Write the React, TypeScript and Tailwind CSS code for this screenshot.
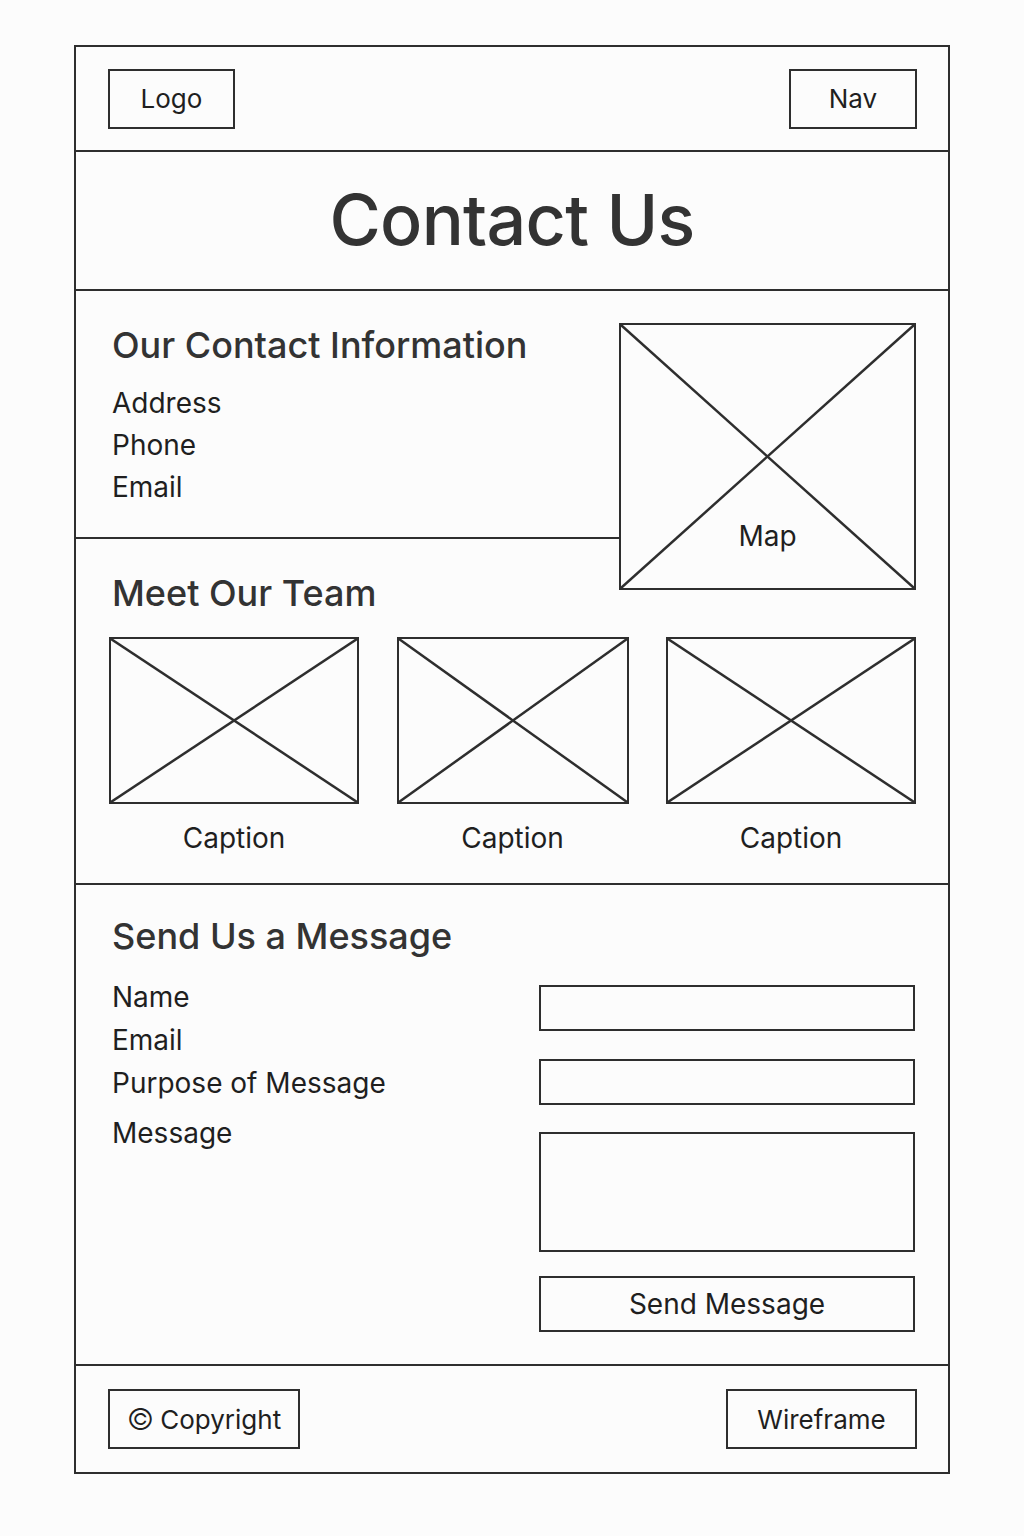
import React from 'react';

const line = 'border-[#2e2e2e]';

function Cross() {
    return (
        <svg className="absolute inset-0 w-full h-full" viewBox="0 0 100 100" preserveAspectRatio="none">
            <line x1="0" y1="0" x2="100" y2="100" stroke="#2e2e2e" strokeWidth="2.5" vectorEffect="non-scaling-stroke" />
            <line x1="100" y1="0" x2="0" y2="100" stroke="#2e2e2e" strokeWidth="2.5" vectorEffect="non-scaling-stroke" />
        </svg>
    );
}

function TeamCard({ width }: { width: string }) {
    return (
        <div className={`flex flex-col items-center ${width}`}>
            <div className={`relative w-full h-[167px] border-2 ${line}`}>
                <Cross />
            </div>
            <div className="mt-[16px] text-[28px] leading-[36px] text-[#1f1f1f]">Caption</div>
        </div>
    );
}

export default function App() {
    return (
        <div className="min-h-screen bg-[#fcfcfc] pt-[45px] pb-[62px]" style={{ fontFamily: 'Inter, "Noto Sans", sans-serif' }}>
            <div className={`mx-auto w-[876px] border-2 ${line} text-[#1f1f1f]`}>
                {/* header */}
                <header className={`h-[105px] flex items-center justify-between pl-[32px] pr-[31px] border-b-2 ${line}`}>
                    <div className={`w-[127px] h-[60px] border-2 ${line} flex items-center justify-center text-[26px]`}>Logo</div>
                    <div className={`w-[128px] h-[60px] border-2 ${line} flex items-center justify-center text-[26px]`}>Nav</div>
                </header>

                {/* title */}
                <section className={`h-[139px] flex items-center justify-center border-b-2 ${line}`}>
                    <h1 className="text-[70px] font-medium tracking-[-0.01em] text-[#333] leading-none pb-[2px]">Contact Us</h1>
                </section>

                {/* contact + team */}
                <section className={`border-b-2 ${line}`}>
                    <div className="flex">
                        <div className="w-[543px]">
                            <div className={`pl-[36px] pt-[34px] pb-[29px] border-b-2 ${line}`}>
                                <h2 className="text-[36px] leading-[40px] font-medium text-[#333]">Our Contact Information</h2>
                                <ul className="mt-[17px] text-[28px] leading-[42px]">
                                    <li>Address</li>
                                    <li>Phone</li>
                                    <li>Email</li>
                                </ul>
                            </div>
                            <h2 className="pl-[36px] pt-[34px] pb-[24px] text-[36px] leading-[40px] font-medium text-[#333]">Meet Our Team</h2>
                        </div>
                        <div className="flex-1 pt-[32px] pr-[32px]">
                            <div className={`relative w-[297px] h-[267px] border-2 ${line} flex flex-col items-center justify-end pb-[34px]`}>
                                <Cross />
                                <span className="relative text-[28px] leading-[36px]">Map</span>
                            </div>
                        </div>
                    </div>
                    <div className="flex justify-between pl-[33px] pr-[32px] pb-[27px]">
                        <TeamCard width="w-[250px]" />
                        <TeamCard width="w-[232px]" />
                        <TeamCard width="w-[250px]" />
                    </div>
                </section>

                {/* message form */}
                <section className={`border-b-2 ${line} pl-[36px] pr-[33px] pt-[31px] pb-[32px]`}>
                    <h2 className="text-[36px] leading-[40px] font-medium text-[#333]">Send Us a Message</h2>
                    <div className="flex justify-between">
                        <div className="mt-[20px] text-[28px] leading-[43px]">
                            <div>Name</div>
                            <div>Email</div>
                            <div>Purpose of Message</div>
                            <div className="mt-[7px]">Message</div>
                        </div>
                        <div className="mt-[29px] w-[376px] flex flex-col">
                            <div className={`h-[46px] border-2 ${line}`} />
                            <div className={`mt-[28px] h-[46px] border-2 ${line}`} />
                            <div className={`mt-[27px] h-[120px] border-2 ${line}`} />
                            <button className={`mt-[24px] h-[56px] border-2 ${line} text-[28px] text-[#1f1f1f] flex items-center justify-center`}>
                                Send Message
                            </button>
                        </div>
                    </div>
                </section>

                {/* footer */}
                <footer className="h-[106px] flex items-center justify-between pl-[32px] pr-[31px]">
                    <div className={`w-[192px] h-[60px] border-2 ${line} flex items-center justify-center gap-[6px] text-[26px]`}>
                        <span className="text-[30px] leading-none font-light">©</span>
                        <span>Copyright</span>
                    </div>
                    <div className={`w-[191px] h-[60px] border-2 ${line} flex items-center justify-center text-[26px]`}>Wireframe</div>
                </footer>
            </div>
        </div>
    );
}
